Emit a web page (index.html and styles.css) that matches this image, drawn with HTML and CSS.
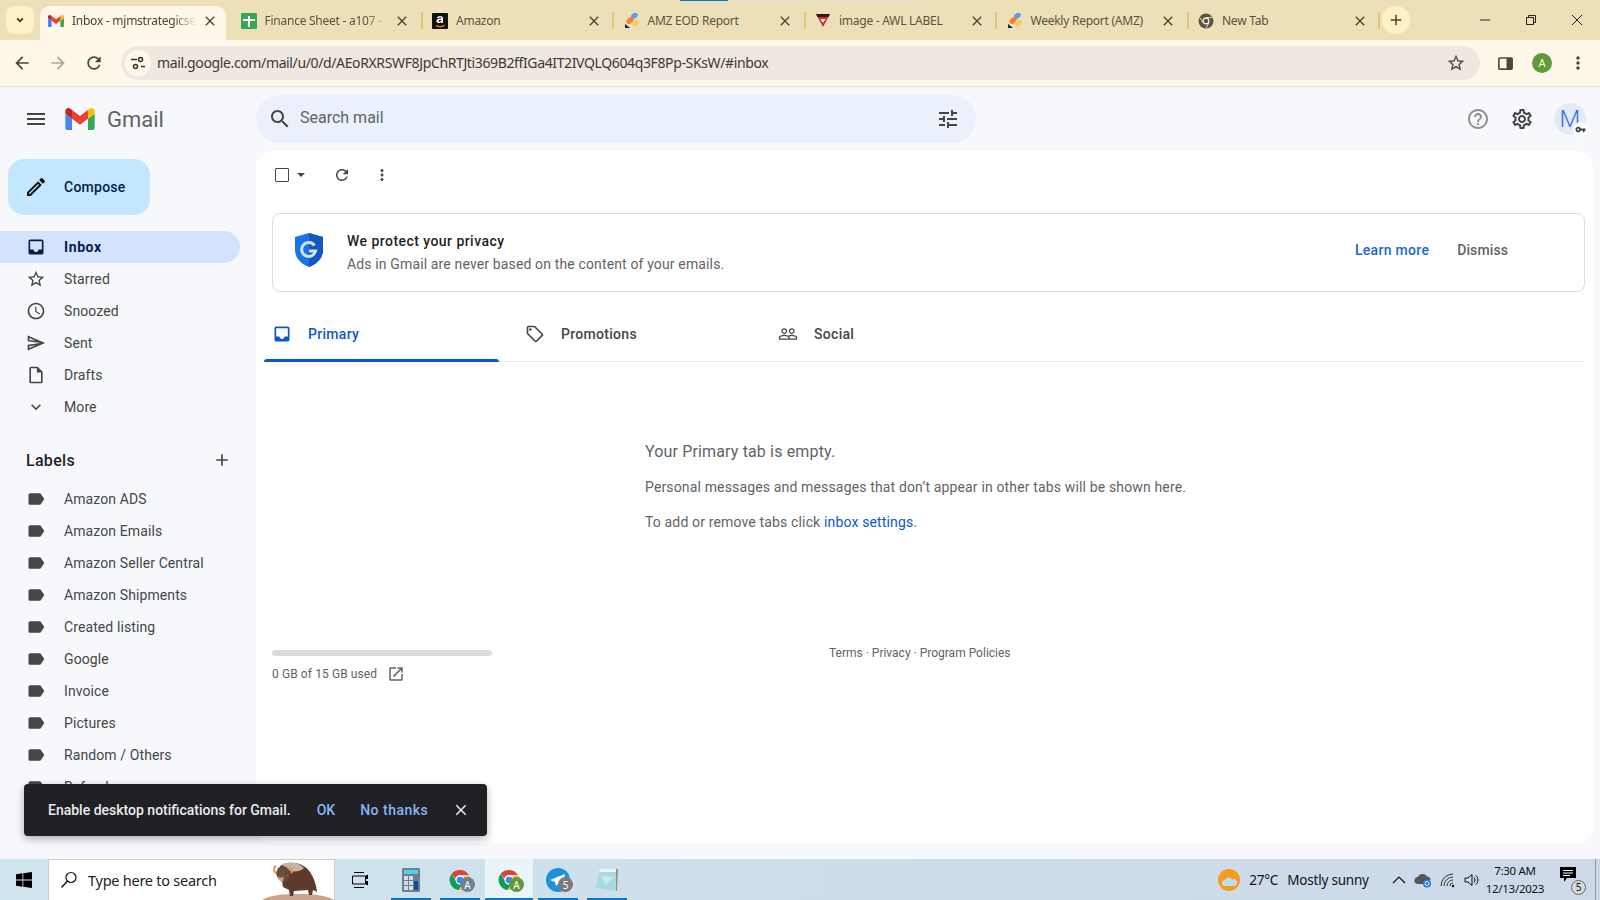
FILE: index.html
```html
<!DOCTYPE html>
<html lang="en">
<head>
    <meta charset="UTF-8">
    <title>Inbox - Gmail</title>
    <link rel="stylesheet" href="styles.css">
</head>
<body>
    <!-- shared icons -->
    <svg class="sprite" xmlns="http://www.w3.org/2000/svg">
        <symbol id="i-close" viewBox="0 0 24 24"><path d="M19 6.41L17.59 5 12 10.59 6.41 5 5 6.41 10.59 12 5 17.59 6.41 19 12 13.41 17.59 19 19 17.59 13.41 12z"/></symbol>
        <symbol id="i-label" viewBox="0 0 24 24"><path d="M17.63 5.84C17.27 5.33 16.67 5 16 5L5 5.01C3.9 5.01 3 5.9 3 7v10c0 1.1.9 1.99 2 1.99L16 19c.67 0 1.27-.33 1.63-.84L22 12l-4.37-6.16z"/></symbol>
        <symbol id="i-inbox" viewBox="0 0 24 24"><path d="M19 3H5c-1.1 0-2 .9-2 2v14c0 1.1.9 2 2 2h14c1.1 0 2-.9 2-2V5c0-1.1-.9-2-2-2zm0 12h-4c0 1.66-1.34 3-3 3s-3-1.34-3-3H5V5h14v10z"/></symbol>
        <symbol id="i-more" viewBox="0 0 24 24"><path d="M12 8c1.1 0 2-.9 2-2s-.9-2-2-2-2 .9-2 2 .9 2 2 2zm0 2c-1.1 0-2 .9-2 2s.9 2 2 2 2-.9 2-2-.9-2-2-2zm0 6c-1.1 0-2 .9-2 2s.9 2 2 2 2-.9 2-2-.9-2-2-2z"/></symbol>
        <symbol id="i-refresh" viewBox="0 0 24 24"><path d="M17.65 6.35C16.2 4.9 14.21 4 12 4c-4.42 0-7.99 3.58-7.99 8s3.57 8 7.99 8c3.73 0 6.84-2.55 7.73-6h-2.08c-.82 2.33-3.04 4-5.65 4-3.31 0-6-2.69-6-6s2.69-6 6-6c1.66 0 3.14.69 4.22 1.78L13 11h7V4l-2.35 2.35z"/></symbol>
        <symbol id="i-star" viewBox="0 0 24 24"><path d="M22 9.24l-7.19-.62L12 2 9.19 8.63 2 9.24l5.46 4.73L5.82 21 12 17.27 18.18 21l-1.63-7.03L22 9.24zM12 15.4l-3.76 2.27 1-4.28-3.32-2.88 4.38-.38L12 6.1l1.71 4.04 4.38.38-3.32 2.88 1 4.28L12 15.4z"/></symbol>
        <symbol id="i-gmail" viewBox="52 42 88 66">
            <path fill="#4285f4" d="M58 108h14V74L52 59v43c0 3.32 2.69 6 6 6"/>
            <path fill="#34a853" d="M120 108h14c3.32 0 6-2.69 6-6V59l-20 15"/>
            <path fill="#fbbc04" d="M120 48v26l20-15v-8c0-7.42-8.47-11.65-14.4-7.2"/>
            <path fill="#ea4335" d="M72 74V48l24 18 24-18v26L96 92"/>
            <path fill="#c5221f" d="M52 51v8l20 15V48l-5.6-4.2c-5.94-4.45-14.4-.22-14.4 7.2"/>
        </symbol>
        <symbol id="i-wave" viewBox="0 0 16 16">
            <rect x="7" y="0.5" width="7" height="5" rx="2.5" transform="rotate(-40 10 3)" fill="#4d9ff0"/>
            <rect x="2" y="5" width="8" height="5" rx="2.5" transform="rotate(-40 6 7.5)" fill="#ff7a2f"/>
            <rect x="8" y="8" width="7" height="5" rx="2.5" transform="rotate(-40 11 10.5)" fill="#ffc94d"/>
            <path d="M1 11l5 4H1z" fill="#12204a"/>
        </symbol>
        <symbol id="i-chrome" viewBox="0 0 48 48">
            <path fill="#db4437" d="M24 4a20 20 0 0 1 17.3 10H24a10 10 0 0 0-9.6 7L7.6 11.5A20 20 0 0 1 24 4z"/>
            <path fill="#0f9d58" d="M7.6 11.5l8.7 15A10 10 0 0 0 27.5 33.4L21.5 43.8A20 20 0 0 1 7.6 11.5z"/>
            <path fill="#fbc02d" d="M41.3 14A20 20 0 0 1 24 44l-2.5-.2 8.6-15A10 10 0 0 0 31 17.5z"/>
            <circle cx="24" cy="24" r="8" fill="#4285f4" stroke="#fff" stroke-width="2"/>
        </symbol>
    </svg>

    <!-- browser chrome -->
    <div class="tabstrip">
        <div class="load-line"><span class="load-done"></span></div>
        <button class="tab-search"><svg width="12" height="12" viewBox="0 0 24 24"><path d="M16.59 7.59L12 12.17 7.41 7.59 5 10l7 7 7-7z" fill="#3c3420"/></svg></button>
        <div class="tab tab-active">
            <svg class="favicon" width="16" height="12"><use href="#i-gmail"/></svg>
            <span class="tab-title tab-fade">Inbox - mjmstrategicse</span>
            <svg class="tab-close"><use href="#i-close"/></svg>
        </div>
        <div class="tab">
            <svg class="favicon" viewBox="0 0 16 16"><rect width="16" height="16" rx="1" fill="#34a853"/><path d="M7 3h2v3h5v2H9v6H7V8H2V6h5z" fill="#fff"/></svg>
            <span class="tab-title tab-fade">Finance Sheet - a107 -</span>
            <svg class="tab-close"><use href="#i-close"/></svg>
        </div>
        <div class="tab tab-sep">
            <svg class="favicon" viewBox="0 0 16 16"><rect width="16" height="16" rx="1" fill="#111"/><path d="M4 12.5c2.5 1.5 6 1.5 8.5-.2" stroke="#f90" stroke-width="1.2" fill="none"/><path d="M5 5c.5-2.5 6-2.8 6 .5V10H9.3V9C8 10.7 4.5 10.5 4.5 8c0-2 2.5-2.5 4.8-2.500 0-1.500-2-1.500-2.500-.2zm4.300 2c-1.500 0-3 .2-3 1 0 1 2.500 1 3-1z" fill="#fff" fill-rule="evenodd"/></svg>
            <span class="tab-title">Amazon</span>
            <svg class="tab-close"><use href="#i-close"/></svg>
        </div>
        <div class="tab tab-sep">
            <svg class="favicon"><use href="#i-wave"/></svg>
            <span class="tab-title">AMZ EOD Report</span>
            <svg class="tab-close"><use href="#i-close"/></svg>
        </div>
        <div class="tab tab-sep">
            <svg class="favicon" viewBox="0 0 16 16"><path d="M1 1h14l-7 13z" fill="#d9262c"/><path d="M1 1h14l-1.5 3h-11z" fill="#2a1a22"/><path d="M5.5 6h5L8 10z" fill="#fff"/></svg>
            <span class="tab-title">image - AWL LABEL</span>
            <svg class="tab-close"><use href="#i-close"/></svg>
        </div>
        <div class="tab tab-sep">
            <svg class="favicon"><use href="#i-wave"/></svg>
            <span class="tab-title">Weekly Report (AMZ)</span>
            <svg class="tab-close"><use href="#i-close"/></svg>
        </div>
        <div class="tab tab-sep tab-last">
            <svg class="favicon" viewBox="0 0 16 16"><circle cx="8" cy="8" r="7.5" fill="#5b5540"/><circle cx="8" cy="8" r="3.4" fill="#fff8ea"/><circle cx="8" cy="8" r="2.3" fill="#5b5540"/><path d="M8 4.6h6.500M5 9.700L1.800 4.500M11 9.700l-3 5.500" stroke="#fff8ea" stroke-width=".8"/></svg>
            <span class="tab-title">New Tab</span>
            <svg class="tab-close"><use href="#i-close"/></svg>
        </div>
        <button class="tab-new"><svg width="18" height="18" viewBox="0 0 24 24"><path d="M19 13h-6v6h-2v-6H5v-2h6V5h2v6h6v2z" fill="#4d4630"/></svg></button>
        <div class="win-controls">
            <svg width="12" height="12" viewBox="0 0 12 12"><path d="M1 6h10" stroke="#222" fill="none"/></svg>
            <svg width="12" height="12" viewBox="0 0 12 12"><path d="M1.5 3.5h7v7h-7zM3.5 3.5v-2h7v7h-2" stroke="#222" fill="none"/></svg>
            <svg width="12" height="12" viewBox="0 0 12 12"><path d="M1 1l10 10M11 1L1 11" stroke="#222" fill="none"/></svg>
        </div>
    </div>

    <div class="toolbar">
        <svg class="tb-icon" viewBox="0 0 24 24"><path d="M20 11H7.83l5.59-5.59L12 4l-8 8 8 8 1.41-1.41L7.83 13H20v-2z"/></svg>
        <svg class="tb-icon tb-off" viewBox="0 0 24 24"><path d="M12 4l-1.41 1.41L16.17 11H4v2h12.17l-5.58 5.59L12 20l8-8z"/></svg>
        <svg class="tb-icon" viewBox="0 0 24 24"><use href="#i-refresh"/></svg>
        <div class="omnibox">
            <span class="site-info"><svg width="16" height="16" viewBox="0 0 16 16"><path d="M1 4.5h6M11 11.5h4" stroke="#3c3420" stroke-width="1.5"/><circle cx="10.5" cy="4.5" r="2" fill="none" stroke="#3c3420" stroke-width="1.5"/><circle cx="5.5" cy="11.5" r="2" fill="none" stroke="#3c3420" stroke-width="1.5"/></svg></span>
            <span class="url">mail.google.com/mail/u/0/d/AEoRXRSWF8JpChRTJti369B2ffIGa4IT2IVQLQ604q3F8Pp-SKsW/#inbox</span>
            <svg class="tb-icon omni-star" viewBox="0 0 24 24"><use href="#i-star"/></svg>
        </div>
        <svg class="side-panel" viewBox="0 0 16 16"><rect x="1" y="2" width="14" height="12" rx="1.5" fill="#4d4630"/><rect x="2.5" y="3.5" width="6.5" height="9" fill="#fff8ea"/></svg>
        <span class="chrome-avatar">A</span>
        <svg class="tb-icon tb-menu" viewBox="0 0 24 24"><use href="#i-more"/></svg>
    </div>

    <!-- gmail -->
    <div class="gmail">
        <header class="gm-header">
            <div class="gm-brand">
                <svg class="gm-icon" viewBox="0 0 24 24"><path d="M3 18h18v-2H3v2zm0-5h18v-2H3v2zm0-7v2h18V6H3z"/></svg>
                <svg class="gm-logo"><use href="#i-gmail"/></svg>
                <span class="gm-word">Gmail</span>
            </div>
            <div class="searchbar">
                <svg class="gm-icon search-icon" viewBox="0 0 24 24"><path d="M15.5 14h-.79l-.28-.27C15.41 12.59 16 11.11 16 9.5 16 5.91 13.09 3 9.5 3S3 5.91 3 9.5 5.91 16 9.5 16c1.61 0 3.09-.59 4.23-1.57l.27.28v.79l5 4.99L20.49 19l-4.99-5zm-6 0C7.01 14 5 11.99 5 9.5S7.01 5 9.5 5 14 7.01 14 9.5 11.99 14 9.5 14z"/></svg>
                <span class="search-hint">Search mail</span>
                <svg class="gm-icon tune-icon" viewBox="0 0 24 24"><path d="M3 17v2h6v-2H3zM3 5v2h10V5H3zm10 16v-2h8v-2h-8v-2h-2v6h2zM7 9v2H3v2h4v2h2V9H7zm14 4v-2H11v2h10zm-6-4h2V7h4V5h-4V3h-2v6z"/></svg>
            </div>
            <div class="gm-actions">
                <svg class="gm-icon help-icon" viewBox="0 0 24 24"><path d="M11 18h2v-2h-2v2zm1-16C6.48 2 2 6.48 2 12s4.48 10 10 10 10-4.48 10-10S17.52 2 12 2zm0 18c-4.41 0-8-3.59-8-8s3.59-8 8-8 8 3.59 8 8-3.59 8-8 8zm0-14c-2.21 0-4 1.79-4 4h2c0-1.1.9-2 2-2s2 .9 2 2c0 2-3 1.75-3 5h2c0-2.25 3-2.5 3-5 0-2.21-1.79-4-4-4z"/></svg>
                <svg class="gm-icon gear-icon" viewBox="0 0 24 24"><path d="M19.43 12.98c.04-.32.07-.64.07-.98 0-.34-.03-.66-.07-.98l2.11-1.65c.19-.15.24-.42.12-.64l-2-3.46c-.09-.16-.26-.25-.44-.25-.06 0-.12.01-.17.03l-2.49 1c-.52-.4-1.08-.73-1.69-.98l-.38-2.65C14.46 2.18 14.25 2 14 2h-4c-.25 0-.46.18-.49.42l-.38 2.65c-.61.25-1.17.59-1.69.98l-2.49-1c-.06-.02-.12-.03-.18-.03-.17 0-.34.09-.43.25l-2 3.46c-.13.22-.07.49.12.64l2.11 1.65c-.04.32-.07.65-.07.98 0 .33.03.66.07.98l-2.11 1.65c-.19.15-.24.42-.12.64l2 3.46c.09.16.26.25.44.25.06 0 .12-.01.17-.03l2.49-1c.52.4 1.08.73 1.69.98l.38 2.65c.03.24.24.42.49.42h4c.25 0 .46-.18.49-.42l.38-2.65c.61-.25 1.17-.59 1.69-.98l2.49 1c.06.02.12.03.18.03.17 0 .34-.09.43-.25l2-3.46c.12-.22.07-.49-.12-.64l-2.11-1.65zm-1.98-1.71c.04.31.05.52.05.73 0 .21-.02.43-.05.73l-.14 1.13.89.7 1.08.84-.7 1.21-1.27-.51-1.04-.42-.9.68c-.43.32-.84.56-1.25.73l-1.06.43-.16 1.13-.2 1.35h-1.4l-.19-1.35-.16-1.13-1.06-.43c-.43-.18-.83-.41-1.23-.71l-.91-.7-1.06.43-1.27.51-.7-1.21 1.08-.84.89-.7-.14-1.13c-.03-.31-.05-.54-.05-.74s.02-.43.05-.73l.14-1.13-.89-.7-1.08-.84.7-1.21 1.27.51 1.04.42.9-.68c.43-.32.84-.56 1.25-.73l1.06-.43.16-1.13.2-1.35h1.39l.19 1.35.16 1.13 1.06.43c.43.18.83.41 1.23.71l.91.7 1.06-.43 1.27-.51.7 1.21-1.07.85-.89.7.14 1.13zM12 8c-2.21 0-4 1.79-4 4s1.79 4 4 4 4-1.79 4-4-1.79-4-4-4zm0 6c-1.1 0-2-.9-2-2s.9-2 2-2 2 .9 2 2-.9 2-2 2z"/></svg>
                <div class="account">
                    <span class="account-letter">M</span>
                    <span class="account-key"><svg width="11" height="11" viewBox="0 0 24 24"><path d="M12.65 10A6 6 0 1 0 12.65 14H17v4h4v-4h2v-4zM7 14a2 2 0 1 1 0-4 2 2 0 0 1 0 4z" fill="#444"/></svg></span>
                </div>
            </div>
        </header>

        <div class="gm-body">
            <aside class="sidebar">
                <button class="compose">
                    <svg width="24" height="24" viewBox="0 0 24 24"><path d="M14.06 9.02l.92.92L5.92 19H5v-.92l9.06-9.06M17.66 3c-.25 0-.51.1-.7.29l-1.83 1.83 3.75 3.75 1.83-1.83c.39-.39.39-1.02 0-1.41l-2.34-2.34c-.2-.2-.45-.29-.71-.29zm-3.6 3.19L3 17.25V21h3.75L17.81 9.94l-3.75-3.75z" fill="#111"/></svg>
                    <span>Compose</span>
                </button>
                <nav class="nav">
                    <a class="nav-item nav-active"><svg class="nav-icon"><use href="#i-inbox"/></svg>Inbox</a>
                    <a class="nav-item"><svg class="nav-icon"><use href="#i-star"/></svg>Starred</a>
                    <a class="nav-item"><svg class="nav-icon" viewBox="0 0 24 24"><path d="M11.99 2C6.47 2 2 6.48 2 12s4.47 10 9.99 10C17.52 22 22 17.52 22 12S17.52 2 11.99 2zM12 20c-4.42 0-8-3.58-8-8s3.58-8 8-8 8 3.58 8 8-3.58 8-8 8zm.5-13H11v6l5.25 3.15.75-1.23-4.5-2.67z"/></svg>Snoozed</a>
                    <a class="nav-item"><svg class="nav-icon" viewBox="0 0 24 24"><path d="M4.01 6.03l7.51 3.22-7.52-1 .01-2.22m7.5 8.72L4 17.97v-2.22l7.51-1M2.01 3L2 10l15 2-15 2 .01 7L23 12 2.01 3z"/></svg>Sent</a>
                    <a class="nav-item"><svg class="nav-icon" viewBox="0 0 24 24"><path d="M14 2H6c-1.1 0-1.99.9-1.99 2L4 20c0 1.1.89 2 1.99 2H18c1.1 0 2-.9 2-2V8l-6-6zM6 20V4h7v5h5v11H6z"/></svg>Drafts</a>
                    <a class="nav-item"><svg class="nav-icon" viewBox="0 0 24 24"><path d="M16.59 8.59L12 13.17 7.41 8.59 6 10l6 6 6-6z"/></svg>More</a>
                </nav>
                <div class="labels-head">
                    <span>Labels</span>
                    <svg class="nav-icon" viewBox="0 0 24 24"><path d="M19 13h-6v6h-2v-6H5v-2h6V5h2v6h6v2z"/></svg>
                </div>
                <nav class="nav">
                    <a class="nav-item"><svg class="nav-icon"><use href="#i-label"/></svg>Amazon ADS</a>
                    <a class="nav-item"><svg class="nav-icon"><use href="#i-label"/></svg>Amazon Emails</a>
                    <a class="nav-item"><svg class="nav-icon"><use href="#i-label"/></svg>Amazon Seller Central</a>
                    <a class="nav-item"><svg class="nav-icon"><use href="#i-label"/></svg>Amazon Shipments</a>
                    <a class="nav-item"><svg class="nav-icon"><use href="#i-label"/></svg>Created listing</a>
                    <a class="nav-item"><svg class="nav-icon"><use href="#i-label"/></svg>Google</a>
                    <a class="nav-item"><svg class="nav-icon"><use href="#i-label"/></svg>Invoice</a>
                    <a class="nav-item"><svg class="nav-icon"><use href="#i-label"/></svg>Pictures</a>
                    <a class="nav-item"><svg class="nav-icon"><use href="#i-label"/></svg>Random / Others</a>
                    <a class="nav-item"><svg class="nav-icon"><use href="#i-label"/></svg>Refund</a>
                </nav>
            </aside>

            <main class="card">
                <div class="actions">
                    <span class="checkbox"></span>
                    <span class="caret"></span>
                    <svg class="act-icon act-refresh"><use href="#i-refresh"/></svg>
                    <svg class="act-icon act-more"><use href="#i-more"/></svg>
                </div>

                <div class="promo">
                    <svg class="shield" viewBox="0 0 28 34">
                        <path d="M14 0l14 4v13c0 8-6 14-14 17C6 31 0 25 0 17V4z" fill="#1a73e8"/>
                        <path d="M14 0l14 4v13c0 8-6 14-14 17z" fill="#1558c0"/>
                        <path d="M19.5 12.5A7 7 0 1 0 20.5 18H14" fill="none" stroke="#d2e3fc" stroke-width="3"/>
                    </svg>
                    <div class="promo-text">
                        <div class="promo-title">We protect your privacy</div>
                        <div class="promo-desc">Ads in Gmail are never based on the content of your emails.</div>
                    </div>
                    <a class="promo-learn">Learn more</a>
                    <a class="promo-dismiss">Dismiss</a>
                </div>

                <div class="tabs">
                    <div class="mail-tab mail-tab-active"><svg class="nav-icon"><use href="#i-inbox"/></svg>Primary</div>
                    <div class="mail-tab">
                        <svg class="nav-icon" viewBox="0 0 24 24"><path d="M21.41 11.58l-9-9C12.05 2.22 11.55 2 11 2H4c-1.1 0-2 .9-2 2v7c0 .55.22 1.05.59 1.42l9 9c.36.36.86.58 1.41.58s1.05-.22 1.41-.59l7-7c.37-.36.59-.86.59-1.41s-.23-1.06-.59-1.42zM13 20.01L4 11V4h7v-.01l9 9-7 7.02z"/><circle cx="6.5" cy="6.5" r="1.5"/></svg>Promotions
                    </div>
                    <div class="mail-tab">
                        <svg class="nav-icon" viewBox="0 0 24 24"><path d="M16.5 13c-1.2 0-3.07.34-4.5 1-1.43-.67-3.3-1-4.5-1C5.33 13 1 14.08 1 16.25V19h22v-2.75c0-2.17-4.33-3.25-6.5-3.25zm-4 4.5h-10v-1.25c0-.54 2.56-1.75 5-1.75s5 1.21 5 1.75v1.25zm9 0H14v-1.25c0-.46-.2-.86-.52-1.22.88-.3 1.96-.53 3.02-.53 2.44 0 5 1.21 5 1.75v1.25zM7.5 12c1.93 0 3.5-1.57 3.5-3.5S9.43 5 7.5 5 4 6.57 4 8.5 5.57 12 7.5 12zm0-5.5c1.1 0 2 .9 2 2s-.9 2-2 2-2-.9-2-2 .9-2 2-2zm9 5.5c1.93 0 3.5-1.57 3.5-3.5S18.43 5 16.5 5 13 6.57 13 8.5s1.57 3.5 3.5 3.5zm0-5.5c1.1 0 2 .9 2 2s-.9 2-2 2-2-.9-2-2 .9-2 2-2z"/></svg>Social
                    </div>
                </div>

                <div class="empty">
                    <h2>Your Primary tab is empty.</h2>
                    <p>Personal messages and messages that don’t appear in other tabs will be shown here.</p>
                    <p>To add or remove tabs click <a>inbox settings</a>.</p>
                </div>

                <div class="foot">
                    <div class="storage">
                        <div class="storage-bar"></div>
                        <div class="storage-text">0 GB of 15 GB used
                            <svg class="storage-open" viewBox="0 0 24 24"><path d="M19 19H5V5h7V3H5c-1.11 0-2 .9-2 2v14c0 1.1.89 2 2 2h14c1.1 0 2-.9 2-2v-7h-2v7zM14 3v2h3.59l-9.83 9.83 1.41 1.41L19 6.41V10h2V3h-7z"/></svg>
                        </div>
                    </div>
                    <div class="foot-links">Terms · Privacy · Program Policies</div>
                </div>
            </main>
        </div>

        <div class="snackbar">
            <span class="snack-msg">Enable desktop notifications for Gmail.</span>
            <a class="snack-ok">OK</a>
            <a class="snack-no">No thanks</a>
            <svg class="snack-close"><use href="#i-close"/></svg>
        </div>
    </div>

    <!-- windows taskbar -->
    <div class="taskbar">
        <div class="start">
            <svg width="16" height="16" viewBox="0 0 16 16"><path d="M0 2.2l6.5-.9v6.3H0zM7.3 1.2L16 0v7.6H7.3zM0 8.4h6.5v6.3L0 13.800zM7.300 8.400H16V16l-8.700-1.200z" fill="#000"/></svg>
        </div>
        <div class="task-search">
            <svg width="18" height="18" viewBox="0 0 18 18"><circle cx="11" cy="6.5" r="5" fill="none" stroke="#111" stroke-width="1.2"/><path d="M7.5 10L1.5 16.5" stroke="#111" stroke-width="1.4"/></svg>
            <span class="task-search-text">Type here to search</span>
            <svg class="yak" viewBox="0 0 72 40">
                <path d="M0 40c8-5 20-6 36-6s28 1 36 6z" fill="#c9a48c"/>
                <path d="M18 6c8-6 24-4 30 6 4 6 6 12 7 20l-4-2-1 5h-3l-1-5-14 1-1 5h-3l-1-6-6-3z" fill="#5c3a2c"/>
                <path d="M20 5c6-4 16-3 22 3-4 4-10 4-14 3z" fill="#c9b4a0"/>
                <path d="M16 8c4-3 9-2 11 2 1 5-1 11-5 12-4 0-7-4-8-9z" fill="#6a4a3a"/>
                <path d="M16 16c2 2 5 2 6 0l-1 5c-2 1-4 0-5-5z" fill="#c4a890"/>
                <path d="M14 6c-2 1-3 5 0 7" stroke="#e8954a" stroke-width="2" fill="none"/>
                <path d="M27 9c3-1 4 2 2 4" stroke="#e8954a" stroke-width="2" fill="none"/>
            </svg>
        </div>
        <div class="task-icon task-plain">
            <svg width="16" height="16" viewBox="0 0 16 16"><path d="M2 .5h10M2 15.5h10M.5 4h13v8H.5z" stroke="#000" fill="none"/><path d="M15 3v4M15 9v4" stroke="#000" stroke-width="2"/></svg>
        </div>
        <div class="task-apps">
            <div class="task-icon task-open">
                <svg width="18" height="24" viewBox="0 0 18 24"><rect width="18" height="24" rx="1.5" fill="#6f7f8d"/><rect x="2" y="2" width="14" height="4" fill="#4fd0ee"/><path d="M2 8h4v4H2zM7 8h4v4H7zM2 13h4v4H2zM7 13h4v4H7zM2 18h4v4H2zM7 18h4v4H7z" fill="#d6dde2"/><rect x="12" y="13" width="4" height="9" fill="#0b4f9e"/></svg>
            </div>
            <div class="task-icon task-open">
                <svg class="chrome-svg"><use href="#i-chrome"/></svg>
                <span class="chrome-badge badge-grey">A</span>
            </div>
            <div class="task-icon task-open task-current">
                <svg class="chrome-svg"><use href="#i-chrome"/></svg>
                <span class="chrome-badge badge-green">A</span>
            </div>
            <div class="task-icon task-open">
                <svg class="chrome-svg" viewBox="0 0 24 24"><circle cx="12" cy="12" r="12" fill="#1c93d8"/><path d="M4 12l15-6-3 13-4-3-2 2-1-4z" fill="#fff"/></svg>
                <span class="chrome-badge badge-count">5</span>
            </div>
            <div class="task-icon task-open">
                <svg width="24" height="24" viewBox="0 0 24 24"><path d="M5 1h17l-1 22-20-3z" fill="#a6dbe6"/><path d="M5 1h17v3H4z" fill="#eef6f8"/><path d="M6 8l13 1-8 8z" fill="#c8ebf1"/><path d="M21 1h2l-1 22h-1z" fill="#a98e5a"/></svg>
            </div>
        </div>
        <div class="tray">
            <div class="weather">
                <svg width="22" height="22" viewBox="0 0 22 22"><circle cx="11" cy="11" r="11" fill="#f59c1c"/><path d="M7 17a3 3 0 0 1 0-6c1-3 6-3.5 7-.5a3.3 3.3 0 0 1 5 3.5c0 1.5-1 3-2.5 3z" fill="#bfdcf5"/></svg>
                <span class="temp">27°C</span>
                <span>Mostly sunny</span>
            </div>
            <div class="tray-icons">
                <svg width="14" height="14" viewBox="0 0 14 14"><path d="M1 10l6-6 6 6" fill="none" stroke="#111" stroke-width="1.2"/></svg>
                <svg width="18" height="16" viewBox="0 0 18 16"><path d="M4 12a3.5 3.5 0 0 1 0-7c1-3.5 7-4.5 9-.5 2 0 3.5 1.5 3.5 3.500H10v4z" fill="#555"/><circle cx="13" cy="11.5" r="4" fill="#1a73e8"/><circle cx="13" cy="11.5" r="2" fill="none" stroke="#fff"/></svg>
                <svg width="16" height="16" viewBox="0 0 16 16"><path d="M1 14A12 12 0 0 1 13 2M4 14a9 9 0 0 1 9-9M7 14a6 6 0 0 1 6-6M10 14a3 3 0 0 1 3-3" fill="none" stroke="#333"/><circle cx="13" cy="14" r="1.2" fill="#111"/></svg>
                <svg width="16" height="16" viewBox="0 0 16 16"><path d="M1 6h3l4-3.5v11L4 10H1z" fill="none" stroke="#111"/><path d="M10 5.5a3.5 3.5 0 0 1 0 5M12 3.5a6 6 0 0 1 0 9" fill="none" stroke="#111"/></svg>
            </div>
            <div class="clock"><span>7:30 AM</span><span>12/13/2023</span></div>
            <div class="notif">
                <svg width="17" height="17" viewBox="0 0 17 17"><path d="M0 0h16v11H7l-3 4v-4H0z" fill="#000"/><path d="M3 3.5h10M3 6h10M3 8.5h7" stroke="#fff"/></svg>
                <span class="notif-count">5</span>
            </div>
            <div class="show-desktop"></div>
        </div>
    </div>
</body>
</html>
```

FILE: styles.css
```css
* {
    box-sizing: border-box;
}

html, body {
    margin: 0;
    padding: 0;
    width: 1600px;
    height: 900px;
    overflow: hidden;
}

body {
    display: flex;
    flex-direction: column;
    font-family: 'Roboto', 'Liberation Sans', sans-serif;
    font-size: 14px;
    color: #444746;
    background: #f6f8fc;
}

button {
    border: 0;
    padding: 0;
    font: inherit;
    background: none;
}

.sprite {
    display: none;
}

/* tab strip */
.tabstrip {
    position: relative;
    display: flex;
    align-items: flex-end;
    flex: 0 0 40px;
    background: #ede0b8;
    padding-left: 6px;
    font-family: 'Noto Sans', 'Open Sans', sans-serif;
    font-size: 12px;
    letter-spacing: -0.25px;
}

.load-line {
    position: absolute;
    top: 0;
    left: 680px;
    width: 241px;
    height: 1px;
    background: #dfe1e0;
}

.load-done {
    display: block;
    width: 48px;
    height: 1px;
    background: #0078d4;
}

.tab-search {
    flex: 0 0 28px;
    height: 28px;
    margin-bottom: 6px;
    border-radius: 8px;
    background: #fdf1c5;
    display: flex;
    align-items: center;
    justify-content: center;
}

.tab {
    position: relative;
    flex: 0 0 191.5px;
    min-width: 0;
    height: 34px;
    display: flex;
    align-items: center;
    padding: 0 11.5px 5px 10.5px;
    color: #5a533e;
}

.tab-active {
    flex-basis: 186px;
    margin: 0 4px 0 6px;
    padding: 0 8px 5px 8px;
    background: #fff8ea;
    border-radius: 10px 10px 0 0;
    color: #4a4533;
}

.tab-sep::before {
    content: "";
    position: absolute;
    left: -1px;
    top: 6px;
    width: 2px;
    height: 17px;
    background: #e0c872;
}

.tab-last::after {
    content: "";
    position: absolute;
    right: -1px;
    top: 6px;
    width: 2px;
    height: 17px;
    background: #e0c872;
}

.favicon {
    flex: 0 0 16px;
    width: 16px;
    height: 16px;
    margin-right: 8px;
}

.tab-active .favicon {
    height: 12px;
}

.tab-title {
    flex: 1;
    min-width: 0;
    white-space: nowrap;
}

/* long titles fade out before the close button */
.tab-fade {
    -webkit-mask-image: linear-gradient(to right, #000 82%, transparent 100%);
    mask-image: linear-gradient(to right, #000 82%, transparent 100%);
}

.tab-close {
    flex: 0 0 16px;
    width: 16px;
    height: 16px;
    margin-left: 6px;
    fill: #4d4630;
}

.tab-new {
    flex: 0 0 28px;
    height: 28px;
    margin: 0 0 6px 3px;
    border-radius: 50%;
    background: #fdf1c5;
    display: flex;
    align-items: center;
    justify-content: center;
}

.win-controls {
    margin-left: auto;
    align-self: stretch;
    display: flex;
    align-items: center;
    gap: 34px;
    padding-right: 17px;
}

/* address bar */
.toolbar {
    flex: 0 0 47px;
    display: flex;
    align-items: center;
    background: #fff8ea;
    border-bottom: 1px solid #efe3d0;
    padding: 0 10px 0 0;
}

.tb-icon {
    width: 20px;
    height: 20px;
    margin-left: 12px;
    fill: #4d4630;
    flex: none;
}

.toolbar .tb-icon:nth-child(2),
.toolbar .tb-icon:nth-child(3) {
    margin-left: 16px;
}

.tb-off {
    fill: #ada897;
}

.omnibox {
    flex: 1;
    height: 34px;
    margin-left: 17px;
    border-radius: 17px;
    background: #efe8e1;
    display: flex;
    align-items: center;
    padding-left: 4px;
    padding-right: 14px;
    max-width: 1359px;
}

.site-info {
    width: 26px;
    height: 26px;
    border-radius: 50%;
    background: #fff8ea;
    display: flex;
    align-items: center;
    justify-content: center;
    flex: none;
}

.url {
    flex: 1;
    margin-left: 6px;
    padding-bottom: 2px;
    font-family: 'Noto Sans', 'Open Sans', sans-serif;
    font-size: 14px;
    letter-spacing: -0.37px;
    color: #3c3a30;
    white-space: nowrap;
}

.omni-star {
    margin-left: 0;
}

.side-panel {
    width: 17px;
    height: 17px;
    margin-left: 17px;
    flex: none;
}

.chrome-avatar {
    flex: none;
    width: 20px;
    height: 20px;
    margin-left: 18px;
    border-radius: 50%;
    background: #5f9b37;
    color: #fff;
    font-size: 11px;
    display: flex;
    align-items: center;
    justify-content: center;
}

.toolbar .tb-menu {
    margin-left: 16px;
}

/* gmail shell */
.gmail {
    position: relative;
    flex: 1;
    display: flex;
    flex-direction: column;
    min-height: 0;
}

.gm-header {
    flex: 0 0 64px;
    display: flex;
    align-items: center;
}

.gm-brand {
    flex: 0 0 256px;
    display: flex;
    align-items: center;
    padding-left: 24px;
}

.gm-icon {
    width: 24px;
    height: 24px;
    fill: #444746;
    flex: none;
}

.gm-logo {
    width: 30px;
    height: 22px;
    margin-left: 17px;
}

.gm-word {
    margin-left: 12px;
    font-size: 22px;
    color: #5f6368;
}

.searchbar {
    flex: 0 0 720px;
    height: 48px;
    border-radius: 24px;
    background: #eaf1fb;
    display: flex;
    align-items: center;
    padding: 0 16px 0 12px;
}

.search-hint {
    flex: 1;
    margin-left: 8px;
    padding-bottom: 4px;
    font-size: 16px;
    color: #5f6368;
}

.gm-actions {
    flex: 1;
    display: flex;
    align-items: center;
    justify-content: flex-end;
    padding-right: 14px;
}

.help-icon {
    fill: #8e918f;
}

.gear-icon {
    margin-left: 20px;
}

.account {
    position: relative;
    width: 32px;
    height: 32px;
    margin-left: 20px;
    border-radius: 50%;
    background: #e3eaf7;
    display: flex;
    align-items: center;
    justify-content: center;
}

.account-letter {
    font-size: 24px;
    font-weight: 300;
    color: #3c6fe0;
}

.account-key {
    position: absolute;
    right: -2px;
    bottom: -2px;
    width: 15px;
    height: 15px;
    border-radius: 50%;
    background: #fff;
    display: flex;
    align-items: center;
    justify-content: center;
}

.gm-body {
    flex: 1;
    display: flex;
    min-height: 0;
    padding-bottom: 16px;
}

/* sidebar */
.sidebar {
    flex: 0 0 256px;
    overflow: hidden;
    padding-top: 8px;
}

.compose {
    width: 142px;
    height: 56px;
    margin-left: 8px;
    border-radius: 16px;
    background: #c2e7ff;
    color: #041e49;
    font-size: 14px;
    font-weight: 500;
    letter-spacing: 0.25px;
    display: flex;
    align-items: center;
    gap: 16px;
    padding-left: 16px;
}

.nav {
    display: flex;
    flex-direction: column;
}

.compose + .nav {
    margin-top: 16px;
}

.nav-item {
    width: 240px;
    height: 32px;
    display: flex;
    align-items: center;
    gap: 18px;
    padding-left: 26px;
    border-radius: 0 16px 16px 0;
    color: #444746;
    letter-spacing: 0.1px;
}

.nav-icon {
    flex: none;
    width: 20px;
    height: 20px;
    fill: #444746;
}

.nav-active {
    background: #d3e3fd;
    color: #041e49;
    font-weight: 700;
    letter-spacing: 0.6px;
}

.nav-active .nav-icon {
    fill: #041e49;
}

.labels-head {
    display: flex;
    align-items: center;
    justify-content: space-between;
    height: 32px;
    margin-top: 21px;
    margin-bottom: 7px;
    padding: 0 24px 0 26px;
    font-size: 16px;
    font-weight: 500;
    letter-spacing: 0.3px;
    color: #1f1f1f;
}

/* main card */
.card {
    flex: 1;
    display: flex;
    flex-direction: column;
    margin-right: 7px;
    background: #fff;
    border-radius: 16px;
}

.actions {
    flex: 0 0 48px;
    display: flex;
    align-items: center;
    padding-left: 19px;
}

.checkbox {
    width: 14px;
    height: 14px;
    border: 1.5px solid #444746;
    border-radius: 1px;
}

.caret {
    margin-left: 8px;
    border: 4px solid transparent;
    border-top: 4px solid #444746;
    border-bottom: 0;
}

.act-icon {
    width: 18px;
    height: 18px;
    fill: #444746;
}

.act-refresh {
    margin-left: 28px;
}

.act-more {
    margin-left: 22px;
}

.promo {
    flex: 0 0 79px;
    display: flex;
    align-items: center;
    margin: 14px 8px 0 16px;
    border: 1px solid #dadce0;
    border-radius: 8px;
}

.shield {
    width: 28px;
    height: 34px;
    margin: 0 0 6px 22px;
}

.promo-text {
    flex: 1;
    margin-left: 24px;
}

.promo-title {
    font-weight: 500;
    letter-spacing: 0.45px;
    color: #1f1f1f;
    line-height: 20px;
}

.promo-desc {
    margin-top: 3px;
    letter-spacing: 0.14px;
    color: #5f6368;
    line-height: 20px;
}

.promo-learn {
    margin-bottom: 6px;
    color: #1a66d8;
    font-weight: 500;
    letter-spacing: 0.3px;
}

.promo-dismiss {
    margin: 0 76px 6px 28px;
    color: #5f6368;
    font-weight: 500;
    letter-spacing: 0.1px;
}

.tabs {
    flex: 0 0 56px;
    display: flex;
    gap: 18px;
    margin: 14px 8px 0 8px;
    border-bottom: 1px solid #e8eaed;
}

.mail-tab {
    position: relative;
    flex: 0 0 235px;
    display: flex;
    align-items: center;
    gap: 16px;
    height: 55px;
    padding-left: 8px;
    font-weight: 500;
    letter-spacing: 0.3px;
    color: #444746;
}

.mail-tab-active {
    color: #0b57d0;
}

.mail-tab-active .nav-icon {
    fill: #0b57d0;
}

.mail-tab-active::after {
    content: "";
    position: absolute;
    left: 0;
    right: 0;
    bottom: -1px;
    height: 3px;
    border-radius: 3px 3px 0 0;
    background: #0b57d0;
}

.empty {
    padding: 80px 0 0 389px;
    color: #5f6368;
    letter-spacing: 0.15px;
}

.empty h2 {
    margin: 0;
    font-size: 16px;
    font-weight: 400;
    line-height: 20px;
}

.empty p {
    margin: 15px 0 0;
    line-height: 20px;
}

.empty a {
    color: #0b57d0;
}

.foot {
    display: flex;
    margin: 118px 0 0 16px;
}

.storage {
    flex: 0 0 220px;
}

.storage-bar {
    height: 6px;
    border-radius: 3px;
    background: #dadce0;
}

.storage-text {
    display: flex;
    align-items: center;
    gap: 10px;
    margin-top: 9px;
    font-size: 12px;
    letter-spacing: 0.1px;
    color: #5f6368;
}

.storage-open {
    width: 18px;
    height: 18px;
    fill: #5f6368;
}

.foot-links {
    margin-left: 337px;
    margin-top: -4px;
    font-size: 12px;
    color: #5f6368;
}

/* snackbar */
.snackbar {
    position: absolute;
    left: 24px;
    bottom: 23px;
    width: 463px;
    height: 52px;
    display: flex;
    align-items: center;
    padding-left: 24px;
    border-radius: 4px;
    background: #202124;
    box-shadow: 0 3px 8px rgba(0, 0, 0, 0.3);
    color: #e8eaed;
    font-weight: 500;
}

.snack-ok {
    margin-left: 26px;
    color: #8ab4f8;
}

.snack-no {
    margin-left: 25px;
    letter-spacing: 0.5px;
    color: #8ab4f8;
}

.snack-close {
    width: 18px;
    height: 18px;
    margin-left: 24px;
    fill: #e8eaed;
}

/* taskbar */
.taskbar {
    flex: 0 0 40px;
    display: flex;
    align-items: stretch;
    background: linear-gradient(to right, #cfe6ee, #cddcea 60%, #cdd9e8);
    font-family: 'Noto Sans', 'Open Sans', sans-serif;
    color: #111;
}

.start {
    flex: 0 0 48px;
    display: flex;
    align-items: center;
    justify-content: center;
}

.task-search {
    flex: 0 0 287px;
    display: flex;
    align-items: center;
    background: #fff;
    border: 1px solid #c9ccd0;
    border-bottom: 0;
    padding-left: 11px;
    overflow: hidden;
}

.task-search-text {
    flex: 1;
    margin-left: 10px;
    font-size: 14.5px;
    letter-spacing: -0.25px;
    color: #222;
}

.yak {
    width: 72px;
    height: 40px;
    flex: none;
}

.task-icon {
    position: relative;
    flex: 0 0 48px;
    display: flex;
    align-items: center;
    justify-content: center;
}

.task-plain {
    flex-basis: 50px;
}

.task-apps {
    display: flex;
    gap: 1px;
    margin-left: 2px;
}

.task-open::after {
    content: "";
    position: absolute;
    left: 4px;
    right: 4px;
    bottom: 0;
    height: 2px;
    background: #0078d4;
}

.task-current {
    background: #eaf4f8;
}

.task-current::after {
    left: 0;
    right: 0;
}

.chrome-svg {
    width: 24px;
    height: 24px;
}

.chrome-badge {
    position: absolute;
    left: 24px;
    top: 18px;
    width: 15px;
    height: 15px;
    border-radius: 50%;
    color: #fff;
    font-size: 10px;
    display: flex;
    align-items: center;
    justify-content: center;
}

.badge-grey {
    background: #6e8291;
}

.badge-green {
    background: #5f9b37;
}

.badge-count {
    background: #7a7a7a;
}

.tray {
    margin-left: auto;
    display: flex;
    align-items: center;
    font-size: 13px;
}

.weather {
    display: flex;
    align-items: center;
    font-size: 13.5px;
    letter-spacing: -0.2px;
}

.temp {
    margin: 0 9px 0 9px;
}

.tray-icons {
    display: flex;
    align-items: center;
    gap: 8px;
    margin-left: 23px;
}

.clock {
    display: flex;
    flex-direction: column;
    align-items: center;
    margin-left: 6px;
    font-size: 11.5px;
    line-height: 18px;
    letter-spacing: -0.3px;
}

.notif {
    position: relative;
    margin-left: 16px;
    width: 26px;
    height: 26px;
}

.notif-count {
    position: absolute;
    right: 0;
    bottom: -2px;
    width: 15px;
    height: 15px;
    border-radius: 50%;
    background: #d4d8dd;
    border: 1px solid #666;
    font-size: 10px;
    display: flex;
    align-items: center;
    justify-content: center;
}

.show-desktop {
    align-self: stretch;
    width: 1px;
    margin-left: 9px;
    margin-right: 4px;
    background: #8f9aa6;
}
```
